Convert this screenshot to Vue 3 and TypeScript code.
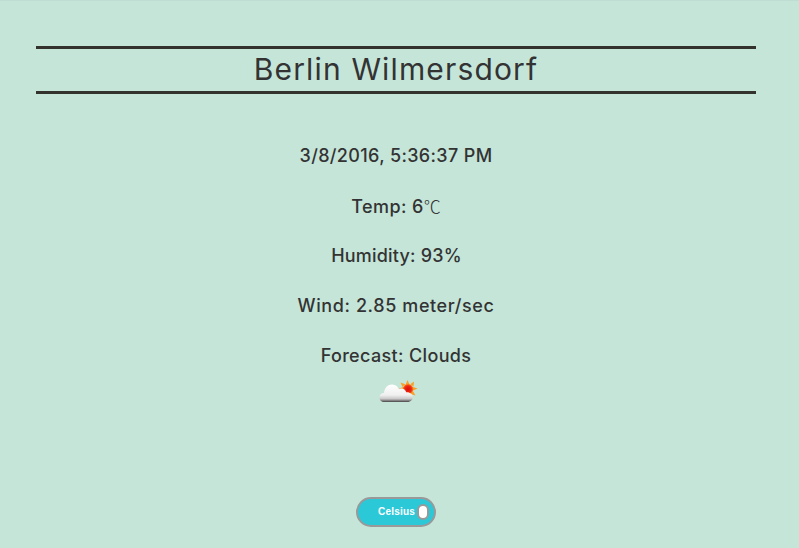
<script setup lang="ts">
interface Reading {
  id: string
  text: string
  symbol?: string
}

const city: string = 'Berlin Wilmersdorf'
const readings: Reading[] = [
  { id: 'date', text: '3/8/2016, 5:36:37 PM' },
  { id: 'temp', text: 'Temp: 6', symbol: '℃' },
  { id: 'humidity', text: 'Humidity: 93%' },
  { id: 'wind', text: 'Wind: 2.85 meter/sec' },
  { id: 'forecast', text: 'Forecast: Clouds' },
]
</script>

<template>
  <main class="page">
    <h1 class="city"><span>{{ city }}</span></h1>
    <section class="readings">
      <p v-for="r in readings" :key="r.id" class="reading" :class="r.id"><span>{{ r.text }}</span><span v-if="r.symbol" class="symbol">{{ r.symbol }}</span></p>
    </section>
    <svg class="icon" width="50" height="36" viewBox="0 0 50 36" aria-hidden="true">
      <defs>
        <linearGradient id="cloud" x1="0" y1="0" x2="0" y2="1">
          <stop offset="0" stop-color="#ffffff" />
          <stop offset=".6" stop-color="#f1f0f0" />
          <stop offset=".82" stop-color="#c9c7c7" />
          <stop offset="1" stop-color="#454343" />
        </linearGradient>
        <radialGradient id="sun">
          <stop offset="0" stop-color="#d80d08" />
          <stop offset=".65" stop-color="#ee2a12" />
          <stop offset="1" stop-color="#ff8a1c" />
        </radialGradient>
      </defs>
      <g fill="#fa9f28">
        <path d="M35.500 4l2.300 5h-4.300zM42 5.500l-.5 5-3.200-2.300zM45.500 12.500l-5 2.200-.2-4zM43.500 19.500l-5-1.600 2.400-3zM37.500 22.500l-2.200-4.400 4-.5zM28.500 6.500l4.800 1.700-2.800 2.800z" />
        <path d="M27 12.500l4.200-1.600.2 3.800z" />
      </g>
      <circle cx="36" cy="13.200" r="5.300" fill="url(#sun)" />
      <path fill="url(#cloud)" d="M11 26C8.500 25.300 7.300 23.600 7.500 21.300C7.600 18.500 9.600 16.900 12 17C12.500 11.900 16 8.400 20.300 8.600C23.400 8.700 25.700 10.500 26.800 13.200C30 11.600 33.500 13.300 34.200 16.300C37.800 15.800 40.800 18.300 40.800 21.300C40.800 23.800 39 25.500 36.500 26Z" />
    </svg>
    <button class="toggle" type="button"><span class="label">Celsius</span><span class="knob"></span></button>
  </main>
</template>

<style>
body {
  background: #c5e5d9;
}
</style>

<style scoped>
.page {
  box-sizing: border-box;
  width: 799px;
  height: 548px;
  padding: 45px 43px 0 36px;
  border-top: 1px solid #bfddd2;
  display: flex;
  flex-direction: column;
  align-items: center;
  color: #333;
  font-family: Inter, "Open Sans", sans-serif;
}
.city {
  box-sizing: border-box;
  width: 100%;
  height: 48px;
  margin: 0;
  border: solid #33322d;
  border-width: 3px 0;
  font-size: 30px;
  font-weight: 400;
  line-height: 41px;
  text-align: center;
  letter-spacing: 1.15px;
}
.readings {
  margin-top: 37px;
}
.reading {
  margin: 0;
  height: 50px;
  line-height: 50px;
  font-size: 18px;
  font-weight: 500;
  text-align: center;
  white-space: nowrap;
}
.date {
  letter-spacing: 0.35px;
}
.temp {
  line-height: 51px;
  letter-spacing: 0.4px;
}
.humidity {
  padding-left: 1px;
  letter-spacing: 0.2px;
}
.wind {
  letter-spacing: 0.6px;
}
.forecast {
  letter-spacing: 0.35px;
}
.symbol {
  font-family: "Noto Sans CJK SC", sans-serif;
  font-weight: 300;
  font-size: 17px;
  line-height: 1;
  letter-spacing: 0;
}
.icon {
  margin: -5px 0 0 1px;
}
.toggle {
  box-sizing: border-box;
  width: 80px;
  height: 30px;
  margin-top: 85px;
  padding: 0 5px 0 0;
  display: flex;
  align-items: center;
  justify-content: flex-end;
  gap: 2px;
  border: 2px solid #999;
  border-radius: 15px;
  background: #2bc9d8;
  color: #fff;
  font: bold 10px/14px "Liberation Sans", Arial, sans-serif;
  letter-spacing: 0.2px;
}
.knob {
  box-sizing: border-box;
  width: 12px;
  height: 16px;
  border: 2px solid #999;
  border-radius: 6px;
  background: #fff;
}
</style>
